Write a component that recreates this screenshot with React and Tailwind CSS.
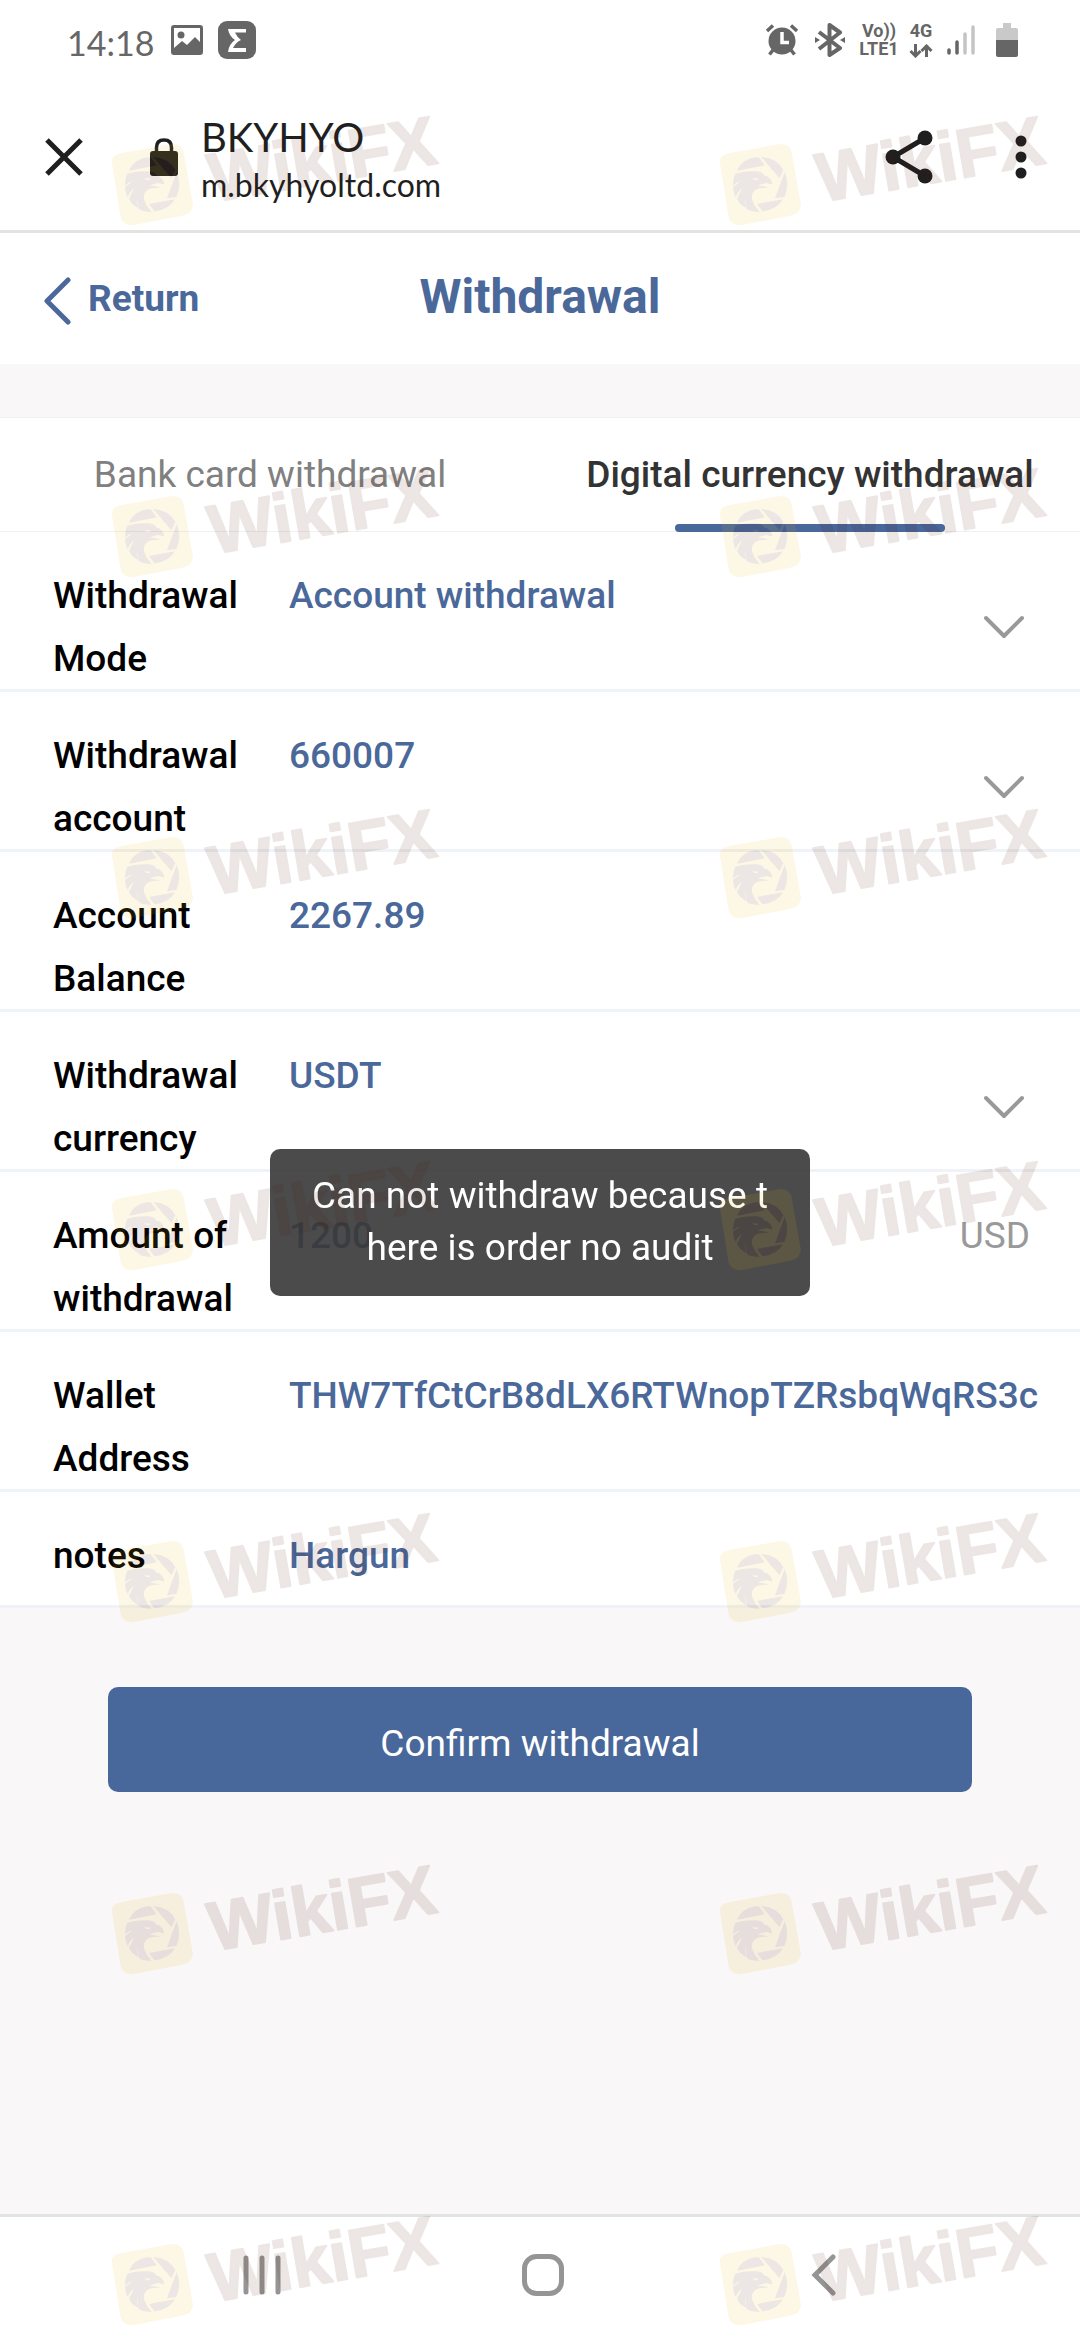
import React, { useState } from 'react';
import clsx from 'clsx';

const fields = [
  { id: 'mode', label: 'Withdrawal Mode', type: 'select', value: 'Account withdrawal' },
  { id: 'account', label: 'Withdrawal account', type: 'select', value: '660007' },
  { id: 'balance', label: 'Account Balance', type: 'text', value: '2267.89' },
  { id: 'currency', label: 'Withdrawal currency', type: 'select', value: 'USDT' },
  { id: 'amount', label: 'Amount of withdrawal', type: 'input', value: '1200', unit: 'USD' },
  { id: 'wallet', label: 'Wallet Address', type: 'input', value: 'THW7TfCtCrB8dLX6RTWnopTZRsbqWqRS3c' },
  { id: 'notes', label: 'notes', type: 'input', value: 'Hargun' },
];

const tabs = ['Bank card withdrawal', 'Digital currency withdrawal'];

export default function App() {
  const [tab, setTab] = useState(1);

  return (
    <div className="relative flex min-h-screen flex-col overflow-hidden bg-[#f9f7f8] font-['Roboto',sans-serif] text-[37px]">
      <header className="border-b-[3px] border-[#e1e4e1] bg-white">
        <StatusBar />
        <BrowserBar />
      </header>

      <main className="flex-1">
        <nav className="grid h-[131px] grid-cols-3 items-center bg-white pb-1 text-[#4a6899]">
          <a href="#back" className="flex items-center gap-[17px] pt-1 pl-11 font-bold">
            <svg viewBox="0 0 27 48" className="mt-1 h-12 w-[27px]" fill="none" stroke="currentColor" strokeWidth="5" strokeLinecap="round" strokeLinejoin="round">
              <path d="M24 3 3 24 24 45" />
            </svg>
            Return
          </a>
          <h1 className="text-center text-[48px] font-bold">Withdrawal</h1>
        </nav>

        <div role="tablist" className="mt-[53px] grid grid-cols-2 border-y border-[#f0f0f2] bg-white">
          {tabs.map((name, i) => (
            <button
              key={name}
              role="tab"
              aria-selected={tab === i}
              onClick={() => setTab(i)}
              className={clsx('relative h-[113px] whitespace-nowrap', tab === i ? 'font-medium text-[#333]' : 'text-[#808080]')}
            >
              {name}
              {tab === i && <span className="absolute -bottom-px left-1/4 h-2 w-1/2 rounded-full bg-[#48679a]" />}
            </button>
          ))}
        </div>

        <form onSubmit={(e) => e.preventDefault()}>
          {fields.map((field) => (
            <FieldRow key={field.id} field={field} />
          ))}
          <div className="flex justify-center pt-[79px]">
            <button type="submit" className="h-[105px] w-4/5 rounded-[10px] bg-[#48679a] pt-2 text-white">
              Confirm withdrawal
            </button>
          </div>
        </form>
      </main>

      <SystemNav />
      <Toast />
      <Watermark />
    </div>
  );
}

function FieldRow({ field }) {
  const { id, label, type, value, unit } = field;
  const control = 'h-[63px] min-w-0 flex-1 self-start bg-transparent p-0 font-medium leading-[63px] text-[#4a6899] outline-none';

  return (
    <div className="flex min-h-[116px] items-start border-b-[3px] border-[#eff2f6] bg-white pt-8 pr-9 pl-[53px]">
      <label htmlFor={id} className="-mb-px w-[236px] shrink-0 pr-10 font-medium leading-[63px] text-black">
        {label}
      </label>
      <div className="flex min-w-0 flex-1 items-center self-stretch">
        {type === 'select' && (
          <>
            <select id={id} className={clsx(control, 'appearance-none')}>
              <option>{value}</option>
            </select>
            <svg viewBox="0 0 40 24" className="pointer-events-none mr-5 h-6 w-10" fill="none" stroke="#999" strokeWidth="4" strokeLinecap="round" strokeLinejoin="round">
              <path d="M2 3 20 21 38 3" />
            </svg>
          </>
        )}
        {type === 'input' && <input id={id} defaultValue={value} className={control} />}
        {type === 'text' && <output id={id} className={control}>{value}</output>}
        {unit && <span className="mr-[14px] self-start leading-[63px] text-[#999]">{unit}</span>}
      </div>
    </div>
  );
}

function StatusBar() {
  return (
    <div className="flex h-20 items-center justify-between pr-[62px] pl-[67px] text-[#666]">
      <div className="flex items-center">
        <span className="w-[104px] pt-1 font-['Lato',sans-serif] text-[34px]">14:18</span>
        <svg viewBox="0 0 32 30" className="mr-[15px] h-[30px] w-8" fill="currentColor">
          <path fillRule="evenodd" d="M3 0H29Q32 0 32 3V27Q32 30 29 30H3Q0 30 0 27V3Q0 0 3 0ZM3 3V23L11 16L16 20L24 12L29 17V3Z" />
          <circle cx="10" cy="10" r="3.5" />
        </svg>
        <svg viewBox="0 0 38 38" className="h-[38px] w-[38px]">
          <rect width="38" height="38" rx="9" fill="#666" />
          <path d="M10 8H28V11.500H17Q19 16 23 19Q18 21 15 27H28V31H10Q11 23 17 19Q11 15 10 8Z" fill="#fff" />
        </svg>
      </div>

      <div className="flex items-center">
        <svg viewBox="0 0 34 32" className="mr-4 h-8 w-[34px]" fill="none" stroke="currentColor">
          <circle cx="17" cy="17" r="13.500" fill="currentColor" stroke="none" />
          <path d="M2 7 8 1.500M26 1.500 32 7M8 26 4.500 30.500M26 26 29.500 30.500" strokeWidth="3.500" />
          <path d="M17 8V18.500H24" stroke="#fff" strokeWidth="3.500" />
        </svg>
        <svg viewBox="0 0 30 34" className="mr-[14px] h-[34px] w-[30px]" fill="none" stroke="currentColor" strokeWidth="4" strokeLinejoin="round">
          <path d="M4 9 25 25 14.500 32V2L25 9.500 4 26" />
          <path d="M0 14 5 17 0 20ZM30 14 25 17 30 20Z" fill="currentColor" stroke="none" />
        </svg>
        <div className="mr-[10px] flex w-10 flex-col items-center text-[18px] leading-[18px] font-bold">
          <span>Vo))</span>
          <span>LTE1</span>
        </div>
        <div className="mr-[14px] flex flex-col items-center text-[18px] leading-[18px] font-bold">
          <span>4G</span>
          <svg viewBox="0 0 24 14" className="mt-1 h-[14px] w-6" fill="none" stroke="currentColor" strokeWidth="3">
            <path d="M6.500 0V12M1.500 7 6.500 12 11.500 7M17.500 13V2M12.500 7 17.500 2 22.500 7" />
          </svg>
        </div>
        <svg viewBox="0 0 28 32" className="mr-[21px] h-8 w-7" strokeWidth="3.500" strokeLinecap="round">
          <path d="M2 26V29M10 18V29" stroke="#666" />
          <path d="M18 10V29M26 3V29" stroke="#c4c4c4" />
        </svg>
        <svg viewBox="0 0 22 34" className="h-[34px] w-[22px]">
          <path d="M7 0H15V5H20Q22 5 22 7V17H0V7Q0 5 2 5H7Z" fill="#c9c9c9" />
          <path d="M0 17H22V32Q22 34 20 34H2Q0 34 0 32Z" fill="#666" />
        </svg>
      </div>
    </div>
  );
}

function BrowserBar() {
  return (
    <div className="flex h-[150px] items-center pt-1 pr-[53px] pl-[45px] text-[#1f1f1f]">
      <button aria-label="Close" className="mr-[66px]">
        <svg viewBox="0 0 38 38" className="h-[38px] w-[38px]" stroke="currentColor" strokeWidth="5">
          <path d="M2 2 36 36M36 2 2 36" />
        </svg>
      </button>
      <svg viewBox="0 0 30 38" className="mr-[22px] h-[38px] w-[30px]">
        <rect x="1" y="13" width="28" height="25" rx="3" fill="currentColor" />
        <path d="M7.500 14V9.500Q7.500 2 15 2Q22.500 2 22.500 9.500V14" fill="none" stroke="currentColor" strokeWidth="3.500" />
      </svg>
      <div className="flex min-w-0 flex-1 flex-col pt-2 font-['Lato',sans-serif]">
        <span className="text-[40px] leading-[48px]">BKYHYO</span>
        <span className="text-[32px] leading-[48px]">m.bkyhyoltd.com</span>
      </div>
      <button aria-label="Share" className="mr-[82px]">
        <svg viewBox="0 0 48 54" className="h-[54px] w-12" fill="currentColor">
          <path d="M40 8 8 27 40 46" fill="none" stroke="currentColor" strokeWidth="5" />
          <circle cx="8" cy="27" r="7.500" />
          <circle cx="40" cy="8" r="7.500" />
          <circle cx="40" cy="46" r="7.500" />
        </svg>
      </button>
      <button aria-label="More options">
        <svg viewBox="0 0 12 44" className="h-11 w-3" fill="currentColor">
          <circle cx="6" cy="6" r="5.500" />
          <circle cx="6" cy="22" r="5.500" />
          <circle cx="6" cy="38" r="5.500" />
        </svg>
      </button>
    </div>
  );
}

function SystemNav() {
  return (
    <footer className="flex h-[126px] justify-between border-t-[3px] border-[#e1e4e1] bg-white pt-9 pr-[240px] pl-[242px] text-[#959595]">
      <button aria-label="Recent apps" className="h-11 w-9">
        <svg viewBox="0 0 36 44" className="overflow-visible" fill="none" stroke="currentColor" strokeWidth="5" strokeLinecap="round">
          <path d="M4 5V39M20 5V39M36 5V39" />
        </svg>
      </button>
      <button aria-label="Home" className="h-11 w-11">
        <svg viewBox="0 0 44 44" fill="none" stroke="currentColor" strokeWidth="5">
          <rect x="3.500" y="3.500" width="37" height="37" rx="12" />
        </svg>
      </button>
      <button aria-label="Back" className="h-11 w-8">
        <svg viewBox="0 0 32 44" fill="none" stroke="currentColor" strokeWidth="5" strokeLinecap="round">
          <path d="M25 4 7 22 25 40" />
        </svg>
      </button>
    </footer>
  );
}

function Toast() {
  return (
    <div className="pointer-events-none fixed inset-x-0 top-26 bottom-0 flex items-center justify-center">
      <p role="alert" className="h-[147px] w-1/2 rounded-[10px] bg-[#373737]/90 pt-[21px] text-center leading-[52px] whitespace-nowrap text-white">
        Can not withdraw because t<br />
        here is order no audit
      </p>
    </div>
  );
}

// rotated brand marks, repeated over the whole screen
const markRows = [102, 454, 795, 1147, 1499, 1851, 2202];
const markCols = [100, 708];

function Watermark() {
  return (
    <svg aria-hidden="true" className="pointer-events-none absolute inset-0 h-full w-full">
      {markRows.map((y) => markCols.map((x) => <BrandMark key={`${x}-${y}`} x={x} y={y} />))}
    </svg>
  );
}

function BrandMark({ x, y }) {
  return (
    <g transform={`translate(${x} ${y})`} opacity="0.11">
      <g transform="translate(-100 -10.7) scale(.3444 .3333)" fill="#521b09">
        <path fill="#ecb612" d="M325 215Q322 192 350 186L500 158Q526 156 533 182L560 340Q560 366 532 373L385 402Q358 403 350 378Z" />
        <path d="M375 238Q390 200 437 197L455 222ZM445 197Q490 200 509 236L498 261ZM513 242Q528 280 512 317L485 321ZM433 338 508 324Q490 355 449 361Z" />
        <path d="M370 247Q400 238 430 240Q450 242 453 252Q475 258 477 280L460 275Q445 277 434 284Q455 283 466 290Q440 288 430 295Q415 305 418 325Q425 345 440 362Q405 360 402 350L400 318Q397 335 402 350Q380 340 375 322L390 290Q373 305 371 318Q364 305 363 287L385 270Q372 273 364 283Q362 262 370 247Z" />
        <path fill="#ecb612" d="M417 261 438 262Q436 268 428 267Z" />
      </g>
      <text
        transform="translate(113 100) rotate(-9.7)"
        fontFamily="Liberation Sans, sans-serif"
        fontWeight="700"
        fontSize="69"
        fill="#521b09"
        stroke="#521b09"
        strokeWidth="2"
        strokeLinejoin="round"
      >
        WikiFX
      </text>
    </g>
  );
}
